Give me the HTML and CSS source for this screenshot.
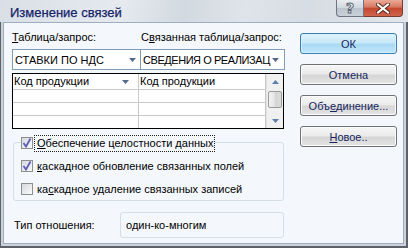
FILE: index.html
```html
<!DOCTYPE html>
<html lang="ru">
<head>
<meta charset="utf-8">
<title>Изменение связей</title>
<link rel="stylesheet" href="styles.css">
</head>
<body>
<div class="window">
  <div class="titlebar">
    <span class="title">Изменение связей</span>
    <div class="caption-btns">
      <span class="cap-btn help">?</span>
      <span class="cap-btn close">
        <svg width="14" height="11" viewBox="0 0 14 11"><path d="M2 1.5L12 9.5M12 1.5L2 9.5" stroke="#5a2a20" stroke-width="4" stroke-linecap="square"/><path d="M2 1.5L12 9.5M12 1.5L2 9.5" stroke="#ffffff" stroke-width="2" stroke-linecap="square"/></svg>
      </span>
    </div>
  </div>
  <div class="client">
    <div class="main">
      <div class="tables">
        <div class="lbl"><u>Т</u>аблица/запрос:</div>
        <div class="lbl">С<u>в</u>язанная таблица/запрос:</div>
        <div class="combo"><span class="combo-text">СТАВКИ ПО НДС</span><svg class="dd" width="7" height="4" viewBox="0 0 7 4"><path d="M0 0H7L3.5 4Z" fill="#56698c"/></svg></div>
        <div class="combo combo2"><span class="combo-text tight">СВЕДЕНИЯ О РЕАЛИЗАЦ</span><svg class="dd" width="7" height="4" viewBox="0 0 7 4"><path d="M0 0H7L3.5 4Z" fill="#56698c"/></svg></div>
      </div>
      <div class="grid">
        <div class="cells">
          <div class="cell head"><span>Код продукции</span><svg class="dd" width="7" height="4" viewBox="0 0 7 4"><path d="M0 0H7L3.5 4Z" fill="#56698c"/></svg></div>
          <div class="cell head"><span>Код продукции</span></div>
          <div class="cell"></div>
          <div class="cell"></div>
          <div class="cell"></div>
          <div class="cell"></div>
          <div class="cell last"></div>
          <div class="cell last"></div>
        </div>
        <div class="vscroll">
          <div class="sb-btn"><svg width="7" height="4" viewBox="0 0 7 4"><path d="M0 4H7L3.5 0Z" fill="#5a7fa8"/></svg></div>
          <div class="sb-thumb"></div>
          <div class="sb-space"></div>
          <div class="sb-btn"><svg width="7" height="4" viewBox="0 0 7 4"><path d="M0 0H7L3.5 4Z" fill="#5a7fa8"/></svg></div>
        </div>
      </div>
      <div class="group">
        <div class="chk-row first">
          <span class="chk on"><svg width="10" height="10" viewBox="0 0 10 10"><path d="M1.5 5L4 8.5L8.5 0.5" fill="none" stroke="#5d5db8" stroke-width="1.8"/></svg></span>
          <span class="chk-label focus"><u>О</u>беспечение целостности данных</span>
        </div>
        <div class="chk-row">
          <span class="chk on"><svg width="10" height="10" viewBox="0 0 10 10"><path d="M1.5 5L4 8.5L8.5 0.5" fill="none" stroke="#5d5db8" stroke-width="1.8"/></svg></span>
          <span class="chk-label"><u>к</u>аскадное обновление связанных полей</span>
        </div>
        <div class="chk-row">
          <span class="chk"></span>
          <span class="chk-label">ка<u>с</u>кадное удаление связанных записей</span>
        </div>
      </div>
      <div class="reltype">
        <span class="rel-lbl">Тип отношения:</span>
        <div class="relbox">один-ко-многим</div>
      </div>
    </div>
    <div class="buttons">
      <div class="btn default">ОК</div>
      <div class="btn">Отмена</div>
      <div class="btn">Объ<u>е</u>динение...</div>
      <div class="btn"><u>Н</u>овое..</div>
    </div>
  </div>
</div>
</body>
</html>
```
FILE: styles.css
```css
html, body {
  margin: 0;
  padding: 0;
  background: #ffffff;
}

.window {
  width: 408px;
  height: 248px;
  box-sizing: border-box;
  border: 1px solid #5d6168;
  border-top: none;
  border-right-width: 2px;
  border-bottom-width: 2px;
  background: #cbd2da;
  display: flex;
  flex-direction: column;
  font-family: "Liberation Sans", Arial, sans-serif;
  font-size: 11px;
  color: #000;
}

.titlebar {
  height: 22px;
  flex: none;
  display: flex;
  align-items: flex-start;
  justify-content: space-between;
  background: linear-gradient(100deg, #d9dfe6 0%, #e6eaef 30%, #d2d9e0 45%, #dfe4ea 60%, #d6dce3 75%, #e3e7ec 100%);
  margin: 0 -2px 0 -1px;
}

.title {
  font-size: 13px;
  color: #15236a;
  padding: 5px 0 0 10px;
  line-height: 15px;
  -webkit-text-stroke: 0.25px #15236a;
}

.caption-btns {
  display: flex;
  margin-right: 5px;
}

.cap-btn {
  height: 17px;
  box-sizing: border-box;
  display: flex;
  align-items: center;
  justify-content: center;
  border: 1px solid #6f7580;
  border-top: none;
}

.help {
  width: 28px;
  border-radius: 0 0 0 4px;
  background: linear-gradient(#e9edf1, #cfd6dd 50%, #bcc5ce 51%, #c9d1d9);
  color: #f4f6f8;
  font-family: "DejaVu Sans", sans-serif;
  font-size: 14px;
  font-weight: bold;
  -webkit-text-stroke: 1px #5b6470;
  line-height: 14px;
}

.close {
  width: 39px;
  border-left: none;
  border-radius: 0 0 4px 0;
  border-color: #7a3a2e;
  background: linear-gradient(#e9a996, #d77a63 45%, #c4472e 50%, #d0654b);
}

.client {
  flex: 1;
  margin: 0 2px 2px 2px;
  border: 1px solid #9eadbf;
  background: #f4f7fb;
  display: flex;
  align-items: flex-start;
}

.main {
  width: 273px;
  margin-left: 8px;
  padding-top: 7px;
}

.tables {
  display: grid;
  grid-template-columns: 129px 144px;
  row-gap: 5px;
}

.lbl {
  line-height: 14px;
  white-space: nowrap;
}

.combo {
  height: 21px;
  box-sizing: border-box;
  border: 1px solid #7f9db9;
  background: #fff;
  display: flex;
  align-items: center;
  padding: 0 4px 0 2px;
}

.combo2 {
  margin-left: -1px;
  padding-right: 5px;
}

.combo-text {
  flex: 1;
  white-space: nowrap;
  margin-right: 2px;
}

.combo-text.tight {
  letter-spacing: -0.45px;
}

.dd {
  flex: none;
}

.grid {
  margin-top: 3px;
  width: 272px;
  box-sizing: border-box;
  border: 1px solid #000;
  background: #fff;
  display: flex;
}

.cells {
  display: grid;
  grid-template-columns: 126px 127px;
  grid-template-rows: 16px 13px 13px 12px;
}

.cell {
  border-right: 1px solid #c9c9c9;
  border-bottom: 1px solid #c9c9c9;
  box-sizing: border-box;
}

.cell.last {
  border-bottom: none;
}

.head {
  display: flex;
  align-items: center;
  justify-content: space-between;
  padding: 0 9px 0 1px;
  line-height: 13px;
}

.vscroll {
  width: 17px;
  height: 54px;
  background: #f0f0f0;
  border-left: 1px solid #e2e2e2;
  box-sizing: border-box;
  display: flex;
  flex-direction: column;
  align-items: center;
}

.sb-btn {
  height: 15px;
  width: 100%;
  display: flex;
  align-items: center;
  justify-content: center;
}

.sb-thumb {
  margin-top: 2px;
  width: 14px;
  height: 17px;
  box-sizing: border-box;
  border: 1px solid #9a9a9a;
  border-radius: 2px;
  background: linear-gradient(90deg, #f3f3f3, #e2e2e2 50%, #d4d4d4 51%, #dcdcdc);
}

.sb-space {
  flex: 1;
}

.group {
  margin: 13px 0 0 1px;
  width: 271px;
  box-sizing: border-box;
  border: 1px solid #d5dfe5;
  border-radius: 3px;
  padding: 0 0 3px 7px;
}

.chk-row {
  height: 16px;
  display: flex;
  align-items: center;
  margin-top: 7px;
}

.chk-row.first {
  margin-top: -8px;
}

.chk {
  width: 12px;
  height: 12px;
  box-sizing: border-box;
  border: 1px solid #8e8f8f;
  background: linear-gradient(135deg, #d6d9dc, #eef0f1 70%, #fbfbfb);
  display: flex;
  align-items: center;
  justify-content: center;
  flex: none;
}

.chk-label {
  margin-left: 1px;
  padding: 1px 1px 1px 2px;
  line-height: 13px;
  white-space: nowrap;
  background: #f4f7fb;
  border: 1px dotted transparent;
}

.chk-label.focus {
  border-color: #222;
}

.reltype {
  margin-top: 11px;
  display: flex;
  align-items: center;
}

.rel-lbl {
  width: 106px;
  padding-left: 2px;
}

.relbox {
  width: 164px;
  height: 26px;
  box-sizing: border-box;
  border: 1px solid #d5dfe5;
  border-radius: 3px;
  display: flex;
  align-items: center;
  padding-left: 5px;
}

.buttons {
  width: 97px;
  margin-left: 15px;
  padding-top: 10px;
  display: flex;
  flex-direction: column;
  gap: 10px;
}

.btn {
  height: 21px;
  box-sizing: border-box;
  border: 1px solid #6f7275;
  border-radius: 3px;
  background: linear-gradient(#f6f6f6, #ebebeb 45%, #d6d6d6 55%, #e4e4e4);
  box-shadow: inset 0 0 0 1px #fbfbfb;
  color: #17275e;
  display: flex;
  align-items: center;
  justify-content: center;
  font-size: 11px;
  white-space: nowrap;
}

.btn.default {
  border-color: #3c7fb1;
  background: linear-gradient(#e3f4fc, #c8e8f9 45%, #a9daf5 55%, #c2e5f8);
  box-shadow: inset 0 0 0 1px #cfeffd;
}
```
